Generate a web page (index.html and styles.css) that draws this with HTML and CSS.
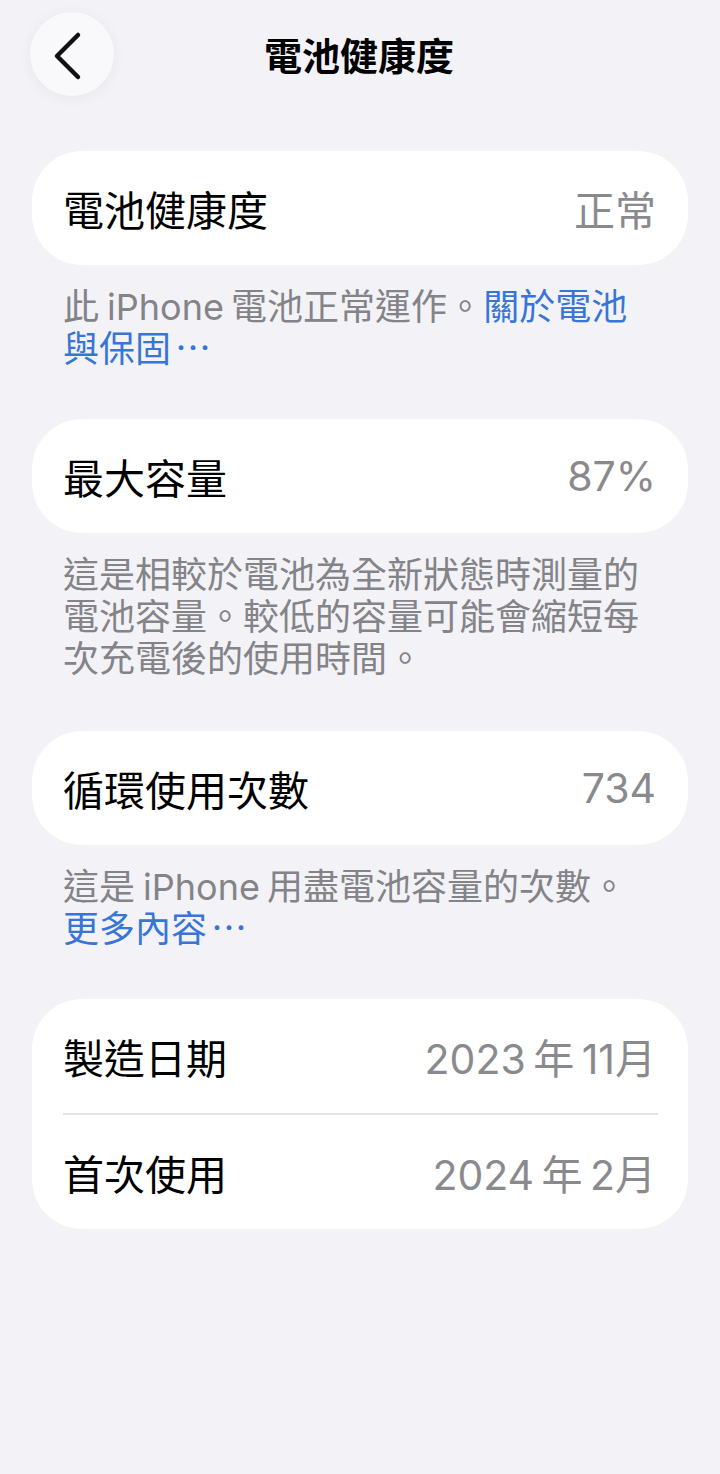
FILE: index.html
```html
<html>
  <head>
    <title>電池健康度</title>
    <meta name="viewport" content="width=device-width, initial-scale=1.0">
    <link rel="stylesheet" href="styles.css">
  </head>

  <body>
    <div class="page">
      <div class="nav">
        <button class="back-btn">
          <svg width="84" height="84" viewBox="0 0 84 84">
            <path d="M48 23 L27 44 L48 65" fill="none" stroke="#111" stroke-width="4.5" stroke-linecap="round" stroke-linejoin="round"/>
          </svg>
        </button>
        <h1>電池健康度</h1>
        <div></div>
      </div>

      <div class="card">
        <div class="row">
          <span class="label">電池健康度</span>
          <span class="value">正常</span>
        </div>
      </div>
      <p class="note">此 <span class="latin">iPhone</span>&thinsp;電池正常運作。<a href="#">關於電池與保固<span class="dots">⋯</span></a></p>

      <div class="card">
        <div class="row">
          <span class="label">最大容量</span>
          <span class="value">87%</span>
        </div>
      </div>
      <p class="note long">這是相較於電池為全新狀態時測量的電池容量。較低的容量可能會縮短每次充電後的使用時間。</p>

      <div class="card">
        <div class="row">
          <span class="label">循環使用次數</span>
          <span class="value">734</span>
        </div>
      </div>
      <p class="note">這是 <span class="latin">iPhone</span>&thinsp;用盡電池容量的次數。<a href="#">更多內容<span class="dots">⋯</span></a></p>

      <div class="card">
        <div class="row">
          <span class="label">製造日期</span>
          <span class="value">2023&thinsp;年&thinsp;11月</span>
        </div>
        <div class="divider"></div>
        <div class="row">
          <span class="label">首次使用</span>
          <span class="value">2024&thinsp;年&thinsp;2月</span>
        </div>
      </div>
    </div>
  </body>
</html>
```

FILE: styles.css
```css
*{
  margin: 0px;
  box-sizing: border-box;
}

body{
  background-color: #f2f2f7;
  font-family: "Inter", "Noto Sans CJK TC", sans-serif;
  color: #000;
}

.page{
  padding: 0px 32px;
}

/* top bar */
.nav{
  display: grid;
  grid-template-columns: 84px 1fr 84px;
  align-items: center;
  padding-top: 12px;
  padding-bottom: 3px;
  margin-left: -2px;
}

.back-btn{
  width: 84px;
  height: 84px;
  padding: 0px;
  border: none;
  border-radius: 50%;
  background-color: #f9f9fb;
  box-shadow: 0px 2px 14px rgba(0, 0, 0, 0.05);
  display: flex;
  align-items: center;
  justify-content: center;
}

.nav h1{
  text-align: center;
  font-family: "Noto Sans CJK TC", sans-serif;
  font-size: 38px;
  font-weight: 700;
  margin-top: -2px;
}

/* grouped cards */
.card{
  background-color: #fff;
  border-radius: 50px;
  margin-top: 52px;
  padding: 0px 32px 0px 31px;
}

.row{
  height: 114px;
  display: flex;
  align-items: center;
  justify-content: space-between;
  font-size: 41px;
}

.label{
  font-family: "Noto Sans CJK TC", sans-serif;
}

.value{
  color: #8a8a8e;
}

.divider{
  height: 2px;
  background-color: #e4e4e8;
  margin-right: -2px;
}

.note{
  padding: 18px 43px 0px 31px;
  font-family: "Noto Sans CJK TC", sans-serif;
  font-size: 36px;
  line-height: 42px;
  color: #838388;
}

.note.long{
  padding-bottom: 2px;
}

.latin{
  font-family: "Inter", sans-serif;
  line-height: 1;
}

.note a{
  color: #3875d7;
  text-decoration: none;
}

.dots{
  margin-left: 4px;
}
```
